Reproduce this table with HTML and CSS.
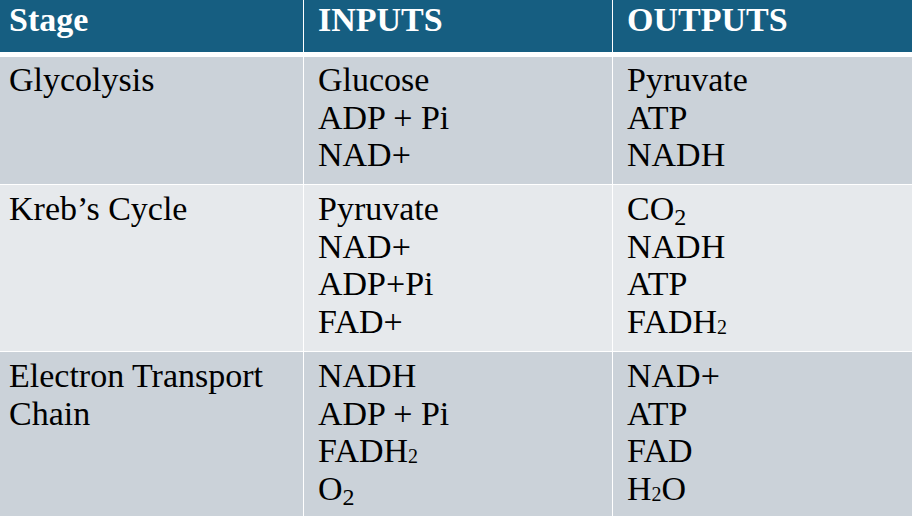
FILE: index.html
```html
<!DOCTYPE html>
<html>
<head>
<meta charset="utf-8">
<link rel="stylesheet" href="styles.css">
</head>
<body>
<div class="table">
  <div class="cell head first">Stage</div>
  <div class="cell head">INPUTS</div>
  <div class="cell head">OUTPUTS</div>

  <div class="cell dark r1 first">Glycolysis</div>
  <div class="cell dark r1">Glucose<br>ADP + Pi<br>NAD+</div>
  <div class="cell dark r1">Pyruvate<br>ATP<br>NADH</div>

  <div class="cell light first">Kreb’s Cycle</div>
  <div class="cell light">Pyruvate<br>NAD+<br>ADP+Pi<br>FAD+</div>
  <div class="cell light">CO<sub class="sub">2</sub><br>NADH<br>ATP<br>FADH<span class="tiny">2</span></div>

  <div class="cell dark first">Electron Transport Chain</div>
  <div class="cell dark">NADH<br>ADP + Pi<br>FADH<span class="tiny">2</span><br>O<sub class="sub">2</sub></div>
  <div class="cell dark">NAD+<br>ATP<br>FAD<br>H<span class="tiny">2</span>O</div>
</div>
</body>
</html>
```
FILE: styles.css
```css
html, body {
  margin: 0;
  padding: 0;
  background: #ffffff;
}
.table {
  width: 912px;
  height: 516px;
  display: grid;
  grid-template-columns: 303px 308px 299px;
  grid-template-rows: 56px 127px 166px 165px;
  column-gap: 1px;
  row-gap: 1px;
  background: #ffffff;
  font-family: "Liberation Serif", "Times New Roman", serif;
  font-size: 34px;
  line-height: 37.5px;
  color: #000000;
  overflow: hidden;
}
.cell {
  box-sizing: border-box;
  padding: 5px 10px 0 14px;
}
.cell.first {
  padding-left: 9px;
}
.cell.r1 {
  padding-top: 4px;
}
.head {
  background: #165e81;
  color: #ffffff;
  font-weight: bold;
  padding-top: 1px;
  border-bottom: 4px solid #ffffff;
}
.dark {
  background: #cbd2d9;
}
.light {
  background: #e6e9ec;
}
.sub {
  font-size: 24px;
  line-height: 0;
  vertical-align: -5px;
}
.tiny {
  font-size: 20px;
  line-height: 0;
  vertical-align: -1px;
}
```
